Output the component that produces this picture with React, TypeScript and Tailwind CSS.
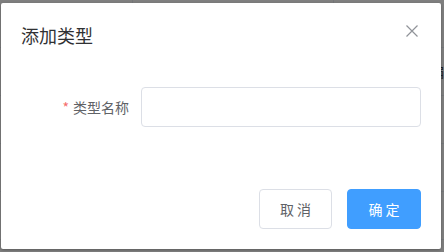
const rows = [0, 1, 2, 3, 4];

export default function App() {
  return (
    <div
      className="relative w-[444px] h-[252px] overflow-hidden bg-white"
      style={{ fontFamily: '"Noto Sans CJK SC", "Noto Sans", sans-serif' }}
    >
      {/* page behind the mask */}
      <div className="absolute inset-0 flex flex-col">
        {rows.map((r) => (
          <div key={r} className="h-[48px] shrink-0 border-b border-[#ebeef5] flex">
            <div className="w-[133px] border-r border-[#ebeef5]" />
            <div className="w-[201px] border-r border-[#ebeef5]" />
            <div className="flex-1 flex items-center justify-end text-[14px] text-[#303133]">
              {r === 1 ? '编' : ''}
            </div>
          </div>
        ))}
      </div>

      {/* mask */}
      <div className="absolute inset-0 bg-black/50" />

      {/* dialog */}
      <div className="absolute left-[1px] top-[3px] w-[440px] h-[246px] bg-white rounded-[2px] shadow-[0_1px_3px_rgba(0,0,0,0.3)] flex flex-col">
        <div className="relative px-5 pt-5 pb-[10px]">
          <span className="block text-[18px] leading-6 text-[#303133]">添加类型</span>
          <button className="absolute left-[404px] top-[21px] w-[14px] h-[14px] text-[#909399]">
            <svg viewBox="0 0 14 14" className="w-[14px] h-[14px]" fill="none" stroke="currentColor" strokeWidth="1.2">
              <path d="M1.5 1.5 L12.5 12.5 M12.5 1.5 L1.5 12.5" />
            </svg>
          </button>
        </div>

        <div className="px-5 pt-[30px] flex items-center">
          <label className="w-[120px] pr-3 text-right text-[14px] leading-10 text-[#606266]">
            <span className="text-[#f56c6c] mr-1">*</span>
            类型名称
          </label>
          <input
            type="text"
            className="flex-1 h-10 px-[15px] rounded-[4px] border border-[#dcdfe6] bg-white outline-none text-[14px]"
          />
        </div>

        <div className="mt-auto px-5 pb-5 flex justify-end gap-[15px]">
          <button className="w-[73px] h-10 rounded-[4px] border border-[#dcdfe6] bg-white text-[14px] text-[#606266]">
            取 消
          </button>
          <button className="w-[74px] h-10 rounded-[4px] border border-[#409eff] bg-[#409eff] text-[14px] text-white">
            确 定
          </button>
        </div>
      </div>
    </div>
  );
}
